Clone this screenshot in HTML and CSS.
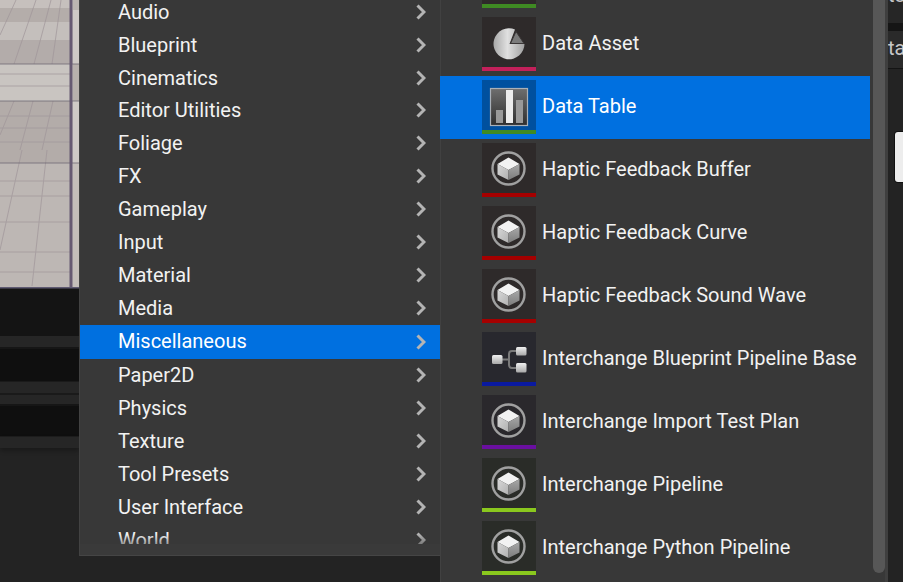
FILE: index.html
```html
<!DOCTYPE html>
<html lang="en">
<head>
<meta charset="utf-8">
<title>Content menu</title>
<link rel="stylesheet" href="styles.css">
</head>
<body>
<svg class="defs" width="0" height="0" aria-hidden="true">
  <defs>
    <linearGradient id="pieFill" x1="0" x2="1" y1="0" y2="0"><stop offset="0" stop-color="#a8a8a8"/><stop offset=".45" stop-color="#e0e0e0"/><stop offset="1" stop-color="#a0a0a0"/></linearGradient>
    <linearGradient id="chartBg" x1="0" x2="0" y1="0" y2="1"><stop offset="0" stop-color="#6e6e6e"/><stop offset="1" stop-color="#2e2e2e"/></linearGradient>
    <linearGradient id="boxFill" x1="0" x2="0" y1="0" y2="1"><stop offset="0" stop-color="#f0f0f0"/><stop offset="1" stop-color="#a8a8a8"/></linearGradient>
    <linearGradient id="cubeLeft" x1="0" x2="1" y1="0" y2="1"><stop offset="0" stop-color="#d8d8d8"/><stop offset="1" stop-color="#b0b0b0"/></linearGradient>
    <linearGradient id="cubeRight" x1="0" x2="0" y1="0" y2="1"><stop offset="0" stop-color="#a8a8a8"/><stop offset="1" stop-color="#7c7c7c"/></linearGradient>
    <symbol id="chev" viewBox="0 0 10 16"><path d="M1.5 1.5 8 8l-6.500 6.500" fill="none" stroke="#b4b4b4" stroke-width="3"/></symbol>
    <symbol id="cube" viewBox="0 0 54 54">
      <circle cx="26.500" cy="25.500" r="16" fill="none" stroke="#a0a0a0" stroke-width="2.400"/>
      <path d="M26.500 14.500 37.500 21 26.500 27 15.500 21Z" fill="#f2f2f2"/>
      <path d="M15.500 21 26.500 27V37L15.500 31.500Z" fill="url(#cubeLeft)"/>
      <path d="M37.500 21 26.500 27V37L37.500 31.500Z" fill="url(#cubeRight)"/>
    </symbol>
  </defs>
</svg>
<div class="page">
  <div class="left">
    <svg class="floor" viewBox="0 0 79 290" width="79" height="290" aria-hidden="true">
      <rect width="79" height="290" fill="#c6c0bd"/>
      <rect y="8" width="71" height="14" fill="#b4adaa"/>
      <rect y="22" width="71" height="18" fill="#c4bfbc"/>
      <rect y="40" width="71" height="24" fill="#b3acaa"/>
      <rect y="64" width="71" height="37" fill="#c9c5c1"/>
      <rect y="101" width="71" height="62" fill="#b3aca9"/>
      <rect y="163" width="71" height="125" fill="#bdb7b4"/>
      <rect x="73" y="0" width="6" height="10" fill="#bcb5b1"/>
      <rect x="73" y="10" width="6" height="54" fill="#cfcac6"/>
      <rect x="73" y="64" width="6" height="37" fill="#b8b1ad"/>
      <rect x="73" y="101" width="6" height="62" fill="#cfcac6"/>
      <rect x="73" y="163" width="6" height="125" fill="#c4beba"/>
      <g stroke="#a0969a" stroke-width="1" fill="none" opacity=".7">
        <path d="M0 35 16 0M14 64 36 0M34 64 51 0M52 64 61 0"/>
        <path d="M0 135 14 101M20 150 33 101M42 150 53 101"/>
        <path d="M0 250 22 150M32 286 47 150"/>
        <path d="M0 196H71M0 222H71M0 252H71M0 272H71M0 181H71M0 116H71M0 128H71M0 142H71M0 74H71M0 86H71"/>
      </g>
      <path d="M0 64H79M0 101H79M0 163H79" stroke="#6a6470" stroke-width="1" opacity=".75"/>
      <path d="M71 0V288" stroke="#675a72" stroke-width="3"/>
      <path d="M0 288H79" stroke="#5f5a72" stroke-width="2"/>
      <rect y="288.500" width="79" height="1.500" fill="#141414"/>
    </svg>
    <div class="void"></div>
    <div class="strip s1"></div>
    <div class="well w1"></div>
    <div class="strip s2"></div>
    <div class="strip s3"></div>
    <div class="well w2"></div>
    <div class="strip s4"></div>
  </div>

  <nav class="menu">
    <div class="menu-clip">
      <ul class="cats">
        <li class="cat">Animation<svg class="chev"><use href="#chev"/></svg></li>
        <li class="cat">Audio<svg class="chev"><use href="#chev"/></svg></li>
        <li class="cat">Blueprint<svg class="chev"><use href="#chev"/></svg></li>
        <li class="cat">Cinematics<svg class="chev"><use href="#chev"/></svg></li>
        <li class="cat cat-short">Editor Utilities<svg class="chev"><use href="#chev"/></svg></li>
        <li class="cat">Foliage<svg class="chev"><use href="#chev"/></svg></li>
        <li class="cat">FX<svg class="chev"><use href="#chev"/></svg></li>
        <li class="cat">Gameplay<svg class="chev"><use href="#chev"/></svg></li>
        <li class="cat">Input<svg class="chev"><use href="#chev"/></svg></li>
        <li class="cat">Material<svg class="chev"><use href="#chev"/></svg></li>
        <li class="cat cat-tall">Media<svg class="chev"><use href="#chev"/></svg></li>
        <li class="cat active">Miscellaneous<svg class="chev"><use href="#chev"/></svg></li>
        <li class="cat">Paper2D<svg class="chev"><use href="#chev"/></svg></li>
        <li class="cat">Physics<svg class="chev"><use href="#chev"/></svg></li>
        <li class="cat">Texture<svg class="chev"><use href="#chev"/></svg></li>
        <li class="cat">Tool Presets<svg class="chev"><use href="#chev"/></svg></li>
        <li class="cat">User Interface<svg class="chev"><use href="#chev"/></svg></li>
        <li class="cat">World<svg class="chev"><use href="#chev"/></svg></li>
      </ul>
      <div class="fade"></div>
    </div>
    <div class="menu-foot"></div>
  </nav>

  <section class="assets">
    <div class="asset-list">
      <ul class="rows">
        <li class="row">
          <span class="thumb t-red"><svg class="glyph"><use href="#cube"/></svg><i class="bar b-green"></i></span>
        </li>
        <li class="row">
          <span class="thumb t-warm"><svg class="glyph" viewBox="0 0 54 54">
            <path d="M27.500 27 33 12.500A15.500 15.500 0 1 0 42.500 27Z" fill="url(#pieFill)"/>
            <path d="M28.500 26.500 34 14.500 42 26.500Z" fill="#7b7b7b" stroke="#3a3636" stroke-width="1"/>
          </svg><i class="bar b-crimson"></i></span>
          Data Asset
        </li>
        <li class="row selected">
          <span class="thumb t-sel"><svg class="glyph" viewBox="0 0 54 54">
            <rect x="8.500" y="8.500" width="37" height="37" fill="url(#chartBg)" stroke="#a9b0b8" stroke-width="1.200"/>
            <rect x="14" y="30" width="7" height="13" fill="#999"/>
            <rect x="24" y="10" width="7" height="33" fill="#ececec"/>
            <rect x="34" y="20" width="7" height="23" fill="#999"/>
          </svg><i class="bar b-green"></i></span>
          Data Table
        </li>
        <li class="row">
          <span class="thumb t-warm"><svg class="glyph"><use href="#cube"/></svg><i class="bar b-red"></i></span>
          Haptic Feedback Buffer
        </li>
        <li class="row">
          <span class="thumb t-warm"><svg class="glyph"><use href="#cube"/></svg><i class="bar b-red"></i></span>
          Haptic Feedback Curve
        </li>
        <li class="row">
          <span class="thumb t-warm"><svg class="glyph"><use href="#cube"/></svg><i class="bar b-red"></i></span>
          Haptic Feedback Sound Wave
        </li>
        <li class="row">
          <span class="thumb t-blue"><svg class="glyph" viewBox="0 0 54 54">
            <path d="M20 27.500H27M34 19H30Q27 19 27 22V33Q27 36 30 36H34" fill="none" stroke="#7a7a7a" stroke-width="2"/>
            <rect x="10" y="23" width="10.500" height="9" rx="1.500" fill="url(#boxFill)"/>
            <rect x="34" y="15" width="10.500" height="8.500" rx="1.500" fill="url(#boxFill)"/>
            <rect x="34" y="31" width="10.500" height="9.500" rx="1.500" fill="url(#boxFill)"/>
          </svg><i class="bar b-blue"></i></span>
          Interchange Blueprint Pipeline Base
        </li>
        <li class="row">
          <span class="thumb t-purple"><svg class="glyph"><use href="#cube"/></svg><i class="bar b-purple"></i></span>
          Interchange Import Test Plan
        </li>
        <li class="row">
          <span class="thumb t-green"><svg class="glyph"><use href="#cube"/></svg><i class="bar b-lime"></i></span>
          Interchange Pipeline
        </li>
        <li class="row">
          <span class="thumb t-green"><svg class="glyph"><use href="#cube"/></svg><i class="bar b-lime"></i></span>
          Interchange Python Pipeline
        </li>
      </ul>
    </div>
    <div class="track"><div class="thumb-bar"></div></div>
  </section>

  <aside class="side">
    <div class="side-top"><span class="side-clip">to</span></div>
    <div class="side-dark"></div>
    <div class="side-tab"><span>ta</span></div>
    <div class="side-body"><div class="white-btn"></div></div>
  </aside>
</div>
</body>
</html>
```

FILE: styles.css
```css
* { box-sizing: border-box; }
html, body { margin: 0; padding: 0; }
body {
  width: 903px;
  height: 582px;
  overflow: hidden;
  background: #232323;
  font-family: Roboto, "Liberation Sans", sans-serif;
  color: #f0f0f0;
}
.defs { display: block; height: 0; }
ul { list-style: none; margin: 0; padding: 0; }

.page {
  display: grid;
  grid-template-columns: 79px 361px 448px 15px;
  height: 582px;
  overflow: hidden;
}

/* Left: viewport and panels behind the menu */
.left { display: flex; flex-direction: column; background: #232323; }
.floor { display: block; flex: none; }
.void { height: 46px; background: #141414; }
.strip { background: #262626; }
.s1 { height: 13px; border-bottom: 2px solid #161616; }
.well { background: #0f0f0f; }
.w1 { height: 32px; }
.s2 { height: 14px; border-top: 1px solid #1a1a1a; border-bottom: 2px solid #1a1a1a; }
.s3 { height: 11px; border-top: 1px solid #262626; border-bottom: 2px solid #161616; }
.w2 { height: 30px; }
.s4 { height: 12px; border-top: 1px solid #1c1c1c; box-shadow: 0 3px 4px rgba(0, 0, 0, .25); }

/* Category menu */
.menu {
  height: 556px;
  background: #383838;
  border-left: 1px solid #424242;
  border-bottom: 1px solid #454545;
  display: flex;
  flex-direction: column;
}
.menu-clip { position: relative; height: 544px; overflow: hidden; flex: none; }
.cats { margin-top: -38px; }
.cat {
  height: 33px;
  display: flex;
  align-items: center;
  justify-content: space-between;
  padding: 0 14px 0 38px;
  font-size: 20px;
  white-space: nowrap;
  color: #f2f2f2;
}
.cat-short { height: 32px; padding-bottom: 1px; }
.cat-tall { height: 34px; padding-bottom: 1px; }
.cat.active {
  background: #0070e0;
  color: #fff;
  height: 34px;
  margin-bottom: -1px;
  padding-bottom: 2px;
}
.cat.active .chev { margin-top: 1px; }
.chev { width: 10px; height: 16px; flex: none; }
.fade {
  position: absolute;
  left: 0; right: 0; bottom: 0;
  height: 10px;
  background: linear-gradient(to bottom, rgba(56, 56, 56, 0), rgba(56, 56, 56, .45));
}
.menu-foot { flex: 1; background: #3a3a3a; }

/* Asset list */
.assets {
  display: flex;
  background: #383838;
  height: 582px;
}
.asset-list {
  width: 430px;
  flex: none;
  overflow: hidden;
  background: linear-gradient(to right, #414141 1px, transparent 1px);
}
.rows { margin-top: -50px; }
.row {
  height: 63px;
  display: flex;
  align-items: flex-start;
  gap: 6px;
  padding: 4px 0 0 42px;
  font-size: 20px;
  line-height: 52px;
  white-space: nowrap;
  color: #f2f2f2;
}
.row.selected { background: #0070e0; color: #fff; }
.thumb {
  width: 54px;
  height: 54px;
  flex: none;
  position: relative;
  display: block;
  background: #2c2828;
}
.glyph { display: block; width: 54px; height: 54px; }
.bar { position: absolute; left: 0; right: 0; bottom: 0; height: 4px; display: block; }
.t-red, .t-warm { background: #2e2a2a; }
.t-sel { background: #00509f; }
.t-blue { background: #28282e; }
.t-purple { background: #2a282c; }
.t-green { background: #2a2c28; }
.b-green { background: #3f8a23; }
.b-crimson { background: #c3205a; }
.b-red { background: #a50000; }
.b-blue { background: #0a1aa0; }
.b-purple { background: #6a0fa0; }
.b-lime { background: #8ac81e; }

.track { flex: 1; padding-left: 3px; background: #383838; border-right: 3px solid #3f3f3f; }
.thumb-bar { width: 12px; height: 573px; background: #575757; border-radius: 0 0 6px 6px; }

/* Far right panel */
.side { display: flex; flex-direction: column; background: #232323; overflow: hidden; font-size: 20px; color: #c8c8c8; }
.side-top { height: 23px; background: #262626; overflow: hidden; }
.side-clip { display: block; margin-top: -17px; line-height: 24px; }
.side-dark { height: 8px; background: #151515; }
.side-tab { height: 38px; background: #2a2a2a; border-bottom: 1px solid #141414; line-height: 34px; }
.side-body { flex: 1; padding: 63px 0 0 7px; }
.white-btn {
  height: 50px;
  background: #ededed;
  border-radius: 3px 0 0 3px;
  box-shadow: 0 0 0 1px #111;
}
```
